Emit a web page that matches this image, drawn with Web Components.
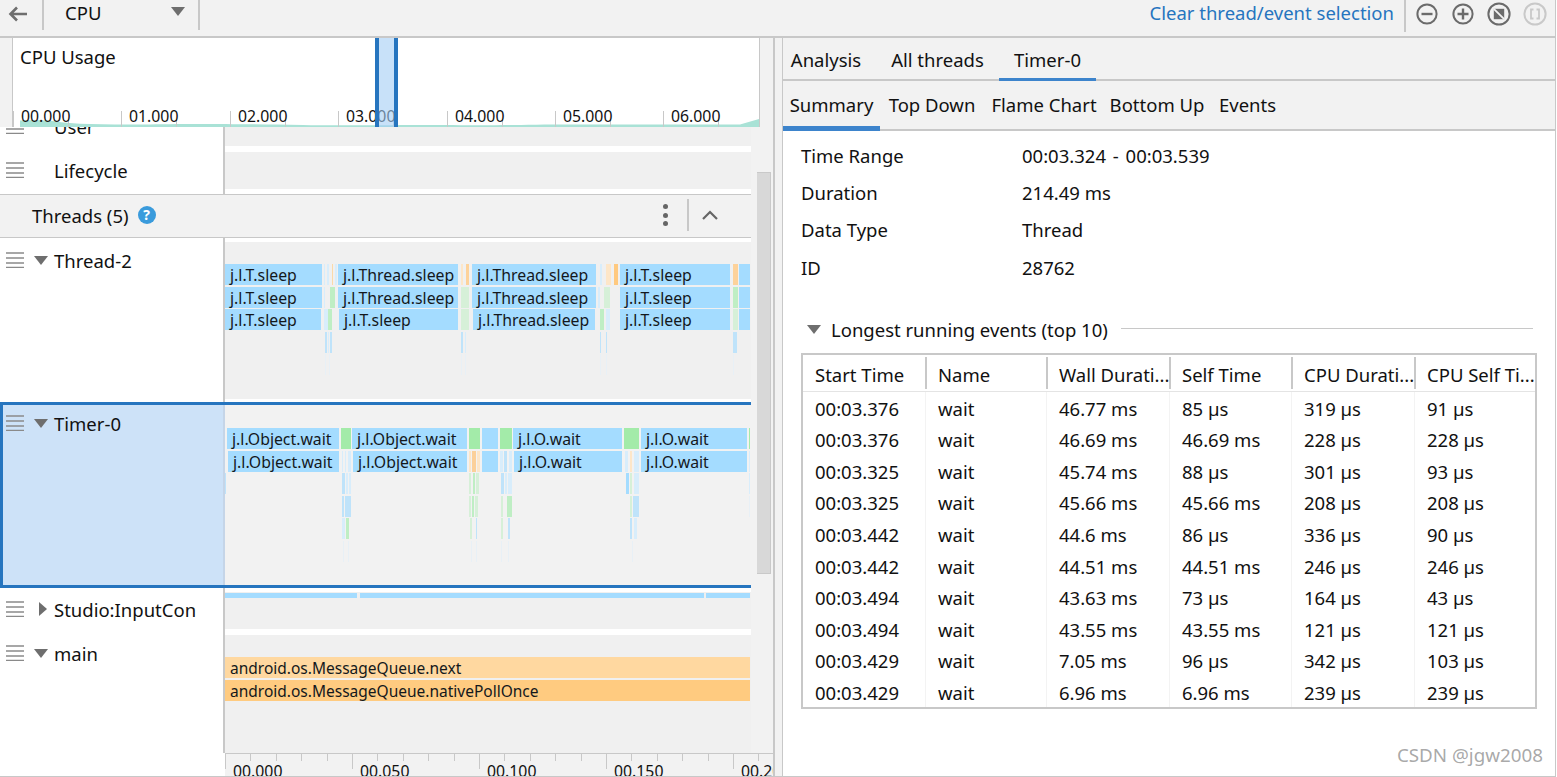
<!DOCTYPE html>
<html lang="en"><head><meta charset="utf-8"><title>CPU profiler</title>
<style>
html,body{margin:0;padding:0;background:#fff}
body{font-family:"Noto Sans","Open Sans",sans-serif;font-size:18.5px;color:#111;width:1557px;height:777px;overflow:hidden}
</style></head><body>
<profiler-app></profiler-app>
<script>
const LINE='#c8c8c8', PANEL='#f2f2f2', TRACK='#f0f0f0', BLUE='#2675bf';
function def(name, css, html, init){
  customElements.define(name, class extends HTMLElement{
    constructor(){super();const r=this.attachShadow({mode:'open'});
      r.innerHTML='<style>'+css+'</style>'+(typeof html==='function'?html(this):html);}
    connectedCallback(){if(init&&!this._i){this._i=1;init.call(this,this.shadowRoot);}}
  });
}
const tri='<svg width="14" height="9" viewBox="0 0 14 9" style="flex:none"><path d="M0 0H14L7 9Z" fill="#6e6e6e"/></svg>';
const triR='<svg width="8" height="14" viewBox="0 0 8 14" style="flex:none"><path d="M0 0V14L8 7Z" fill="#6e6e6e"/></svg>';

/* ---------- top bar ---------- */
def('zoom-icon',':host{display:block;width:24px;height:24px}svg{display:block}','<svg width="24" height="24" viewBox="0 0 24 24"></svg>',function(r){
  const k=this.getAttribute('kind'),s=r.querySelector('svg');
  const c=k==='fit-off'?'#c9c9c9':'#6b6b6b';
  let h='<circle cx="12" cy="12" r="'+(k==='minus'||k==='plus'?9.6:10.6)+'" fill="none" stroke="'+c+'" stroke-width="2"/>';
  if(k==='minus')h+='<path d="M6.5 12h11" stroke="'+c+'" stroke-width="2.4"/>';
  if(k==='plus')h+='<path d="M6.5 12h11M12 6.5v11" stroke="'+c+'" stroke-width="2.4"/>';
  if(k==='fit')h+='<path d="M6.8 6.8h10.4v10.4H6.8z" fill="#6b6b6b"/><path d="M6.8 6.8 17.2 17.2" stroke="#f2f2f2" stroke-width="1.8"/>';
  if(k==='fit-off')h+='<path d="M10.5 7.5H8v9h2.5M13.5 7.5H16v9h-2.5" fill="none" stroke="'+c+'" stroke-width="1.8"/>';
  s.innerHTML=h;
});
def('top-bar',`
:host{display:flex;align-items:flex-start;height:36px;background:${PANEL};border-bottom:2px solid ${LINE};box-sizing:content-box}
.sep{width:2px;height:30px;background:${LINE};flex:none}
.back{width:42px;height:28px;display:flex;align-items:center;justify-content:flex-start;padding-left:8px;box-sizing:border-box;flex:none}
.sel{width:154px;height:25px;display:flex;align-items:center;padding-left:21px;box-sizing:border-box;flex:none;justify-content:space-between;padding-right:13px}
.sp{flex:1}
a{color:${BLUE};height:25px;line-height:25px;margin-right:10px;text-decoration:none}
.icons{display:flex;gap:12px;padding:2px 8px 0 9px}
.sel svg{margin-bottom:2px}
`,`<div class="back"><svg width="19" height="16" viewBox="0 0 19 16"><path d="M19 8H3M9 1.5 2.500 8 9 14.500" fill="none" stroke="#6e6e6e" stroke-width="2.600"/></svg></div>
<div class="sep"></div><div class="sel"><span>CPU</span>${tri}</div><div class="sep"></div><div class="sp"></div>
<a>Clear thread/event selection</a><div class="sep" style="height:32px"></div>
<div class="icons"><zoom-icon kind="minus"></zoom-icon><zoom-icon kind="plus"></zoom-icon><zoom-icon kind="fit"></zoom-icon><zoom-icon kind="fit-off"></zoom-icon></div>`);

/* ---------- overview ---------- */
def('cpu-overview',`
:host{display:block;height:89px;background:${PANEL};padding-left:12px;flex:none}
.box{position:relative;width:748px;height:89px;background:#fff;border-left:1px solid ${LINE};border-right:1px solid ${LINE};box-sizing:border-box;overflow:hidden}
.title{padding:7px 0 0 7px;line-height:24px}
.tick{position:absolute;bottom:0;width:1px;background:${LINE}}
.lbl{position:absolute;top:66px;font-size:15.8px;line-height:24px}
svg{position:absolute;left:0;bottom:0}
.selbox{position:absolute;left:362px;top:0;width:23px;height:89px;box-sizing:border-box;border-left:4px solid ${BLUE};border-right:4px solid ${BLUE};background:rgba(164,205,245,.6)}
`,`<div class="box"><div class="title">CPU Usage</div>
<svg width="746" height="12" viewBox="0 0 746 12"><path d="M7 12V5.500C20 5 30 5 40 6 60 9.500 90 9.500 130 9.500 170 8.800 200 8.500 290 10 330 11 380 9.500 440 10 480 11 500 9.500 560 9.500H727L746 4V12Z" fill="#a9e2d6"/></svg>
<span id="t"></span><div class="selbox"></div></div>`,function(r){
  const t=r.getElementById('t');let h='';
  [0,1,2,3,4,5,6].forEach((n,i)=>{const x=[0,108,217,325,434,542,650][i];
    h+=`<i class="tick" style="left:${x}px;height:16px"></i><i class="tick" style="left:${x+55}px;height:8px"></i><span class="lbl" style="left:${x+8}px">0${n}.000</span>`;});
  t.innerHTML=h;
});

/* ---------- flame chart: bars on a free canvas ---------- */
const B='#a4dcff',G='#a3eba9',O='#ffc97f',LB='#d8edfb',LG='#d6f0d8',LO='#fde6c8',FB='#e8f0f6',TB='#bfe3fa',MG='#bfeec4';
const DATA={
 t2:{top:22,rows:[
  [[0,97,B,'j.l.T.sleep'],[99,100,LB],[102,104,LB],[107,108,'#fbd9a8'],[110,112,LB],[113,233,B,'j.l.Thread.sleep'],[236,238,LO],[241,244,'#fdd29a'],[247,371,B,'j.l.Thread.sleep'],[375,377,LB],[381,386,LO],[389,393,O],[395,505,B,'j.l.T.sleep'],[508,513,'#fdd29a'],[514,525,B]],
  [[0,97,B,'j.l.T.sleep'],[99,100,LB],[105,110,MG],[113,233,B,'j.l.Thread.sleep'],[236,244,LG],[247,371,B,'j.l.Thread.sleep'],[373,375,LB],[379,385,LG],[395,505,B,'j.l.T.sleep'],[508,513,MG],[514,525,B]],
  [[0,96,B,'j.l.T.sleep'],[99,103,LB],[103,107,MG],[114,233,B,'j.l.T.sleep'],[236,244,LG],[248,370,B,'j.l.Thread.sleep'],[375,379,MG],[381,385,LB],[395,505,B,'j.l.T.sleep'],[508,513,LG],[514,525,B]],
  [[100,102,TB],[103,104,LB],[105,107,TB],[236,238,TB],[240,241,LB],[375,376,TB],[381,382,TB],[508,512,TB]],
  [[100,101,FB],[104,105,FB],[236,237,FB],[240,241,FB],[375,376,FB],[381,382,FB],[508,509,FB]]
 ]},
 t0:{top:23,rows:[
  [[2,114,B,'j.l.Object.wait'],[116,126,G],[127,242,B,'j.l.Object.wait'],[244,255,G],[257,273,B],[275,287,G],[288,397,B,'j.l.O.wait'],[399,414,G],[416,522,B,'j.l.O.wait'],[524,525,G]],
  [[3,114,B,'j.l.Object.wait'],[117,118,LB],[120,121,LB],[123,126,LB],[128,242,B,'j.l.Object.wait'],[244,246,LO],[247,251,'#fbd09a'],[252,255,LO],[257,273,B],[275,278,LB],[279,282,TB],[284,287,LB],[289,397,B,'j.l.O.wait'],[400,403,LB],[405,407,LO],[409,414,LB],[416,522,B,'j.l.O.wait'],[524,525,LB]],
  [[0,1,TB],[117,120,TB],[121,123,LB],[124,126,LB],[244,246,LG],[248,250,MG],[251,254,LG],[276,279,TB],[280,282,LB],[283,287,LB],[401,404,B],[405,407,LG],[409,414,LB],[524,525,LB]],
  [[117,119,TB],[120,126,TB],[244,246,LG],[247,249,MG],[250,253,LG],[276,278,LG],[282,287,MG],[405,407,LG],[408,414,TB],[524,525,FB]],
  [[117,120,LB],[121,124,MG],[245,247,LG],[251,252,TB],[276,278,LG],[283,285,TB],[405,407,TB],[409,412,LB]],
  [[118,119,FB],[123,124,FB],[246,247,FB],[251,252,FB],[276,277,FB],[283,284,FB],[407,408,FB]]
 ]},
 studio:{top:1,h:5,rows:[[[0,132,B],[135,479,B],[481,525,B]]]},
 main:{top:22,fs:15.5,rows:[[[0,525,'#ffd8a0','android.os.MessageQueue.next']],[[0,525,'#ffcb80','android.os.MessageQueue.nativePollOnce']]]}
};
def('flame-chart',`
:host{display:block;position:relative;height:100%;overflow:hidden}
b{position:absolute;font-weight:400;font-size:15.8px;white-space:nowrap;overflow:hidden;line-height:23px;box-sizing:border-box;color:#14181c}
b.x{padding-left:5px}
`,'<div id="c"></div>',function(r){
  const d=DATA[this.getAttribute('data')],H=d.h||21;let h='';
  d.rows.forEach((row,i)=>row.forEach(([a,z,c,t])=>{
    h+=`<b${t?' class="x"':''} style="left:${a}px;width:${z-a}px;top:${d.top+i*22.6}px;height:${H}px;background:${c}${d.fs?';font-size:'+d.fs+'px':''}">${t||''}</b>`;}));
  r.getElementById('c').innerHTML=h;
});

/* ---------- track rows ---------- */
def('drag-handle',`:host{display:block;width:18px;height:16px;flex:none}svg{display:block}`,
 '<svg width="18" height="16" viewBox="0 0 18 16"><path d="M0 1h18M0 6h18M0 11h18M0 15.500h18" stroke="#8a8a8a" stroke-width="1.500"/></svg>');
def('track-row',`
:host{display:grid;grid-template-columns:223px 2px 526px;height:var(--h);flex:none;box-sizing:border-box;background:#fff}
.lab{padding:var(--lt,8px) 0 0 6px;box-sizing:border-box;display:flex;align-items:flex-start}
.in{display:flex;align-items:center;height:28px;width:100%}
.tw{width:30px;display:flex;justify-content:center;flex:none}
.tw .d{margin-left:4px;display:flex}.tw .r{margin-left:8px;display:flex}
.t{white-space:nowrap}
.v{background:${LINE}}
.c{padding:var(--pt,0) 0 var(--pb,0);box-sizing:border-box;height:100%}
.cv{background:${TRACK};height:100%}
:host([selected]){border-top:3px solid ${BLUE};border-bottom:3px solid ${BLUE};background:${PANEL}}
:host([selected]) .lab{background:#cde2f8;border-left:3px solid ${BLUE};padding-left:3px;padding-top:4px}
:host([selected]) .v{background:#c5d5e8}
:host([selected]) .cv{background:${PANEL}}
`,h=>{const a=h.getAttribute('arrow');return `<div class="lab"><div class="in"><drag-handle></drag-handle><span class="tw">${a==='down'?'<span class="d">'+tri+'</span>':a==='right'?'<span class="r">'+triR+'</span>':''}</span><span class="t"><slot name="label"></slot></span></div></div><div class="v"></div><div class="c"><div class="cv"><slot></slot></div></div>`});
def('threads-header',`
:host{display:flex;align-items:center;background:${PANEL};border-top:1px solid ${LINE};border-bottom:1px solid ${LINE};padding:0 0 2px 32px;box-sizing:border-box;flex:none;height:44px}
.q{width:18px;height:18px;border-radius:50%;background:#3a9bdc;color:#fff;font-size:14px;font-weight:700;line-height:18px;text-align:center;margin-left:9px}
.sp{flex:1}
.k{display:flex;flex-direction:column;gap:3.500px;margin-right:19px}
.k i{width:5px;height:5px;border-radius:50%;background:#666}
.s{width:2px;height:32px;background:${LINE}}
svg{margin:0 33px 0 13px}
`,`<span>Threads (5)</span><span class="q">?</span><span class="sp"></span><span class="k"><i></i><i></i><i></i></span><span class="s"></span><svg width="16" height="10" viewBox="0 0 16 10"><path d="M1 9 8 2l7 7" fill="none" stroke="#666" stroke-width="2.200"/></svg>`);

def('time-axis',`
:host{display:block;position:relative;height:23px;background:${PANEL};border-top:1px solid ${LINE};width:548px;overflow:hidden;box-sizing:border-box;flex:none}
i{position:absolute;top:0;width:1px;background:${LINE}}
span{position:absolute;top:5px;font-size:15.8px;line-height:24px}
`,'<div id="a"></div>',function(r){
  let h='';for(let n=0;n<22;n++){const x=Math.round(n*25.4);if(x>546)break;h+=`<i style="left:${x}px;height:${n%5?7:15}px"></i>`;
    if(n%5===0){const v=(n/5*50);h+=`<span style="left:${x+8}px">00.${String(v).padStart(3,'0')}</span>`;}}
  r.getElementById('a').innerHTML=h;
});

def('left-pane',`
:host{display:flex;flex-direction:column;width:773px;height:739px;background:${PANEL};flex:none;overflow:hidden}
.mid{display:flex;height:626px;flex:none;overflow:hidden}
.list{width:751px;display:flex;flex-direction:column;overflow:hidden;background:#fff}
.gut{width:22px;padding:45px 2px 0 6px;box-sizing:border-box;flex:none}
.th{height:402px;background:#d8d8d8;border-top:1px solid #c9c9c9;border-right:1px solid #c9c9c9;border-bottom:1px solid #c9c9c9;box-sizing:border-box}
.ax{background:#fff;padding-left:225px;height:23px;flex:none}
`,`<cpu-overview></cpu-overview>
<div class="mid"><div class="list">
 <track-row style="--h:40px;--pb:6px;--lt:0px;margin-top:-15px"><span slot="label">User</span></track-row>
 <track-row style="--h:42px;--pb:5px;--lt:4px"><span slot="label">Lifecycle</span></track-row>
 <threads-header></threads-header>
 <track-row arrow="down" style="--h:164px;--pt:4px;--pb:3px"><span slot="label">Thread-2</span><flame-chart data="t2"></flame-chart></track-row>
 <track-row arrow="down" selected style="--h:186px"><span slot="label">Timer-0</span><flame-chart data="t0"></flame-chart></track-row>
 <track-row arrow="right" style="--h:47px;--pt:4px;--pb:6px;--lt:7px"><span slot="label">Studio:InputCon</span><flame-chart data="studio"></flame-chart></track-row>
 <track-row arrow="down" style="--h:118px;--lt:4px"><span slot="label">main</span><flame-chart data="main"></flame-chart></track-row>
</div><div class="gut"><div class="th"></div></div></div>
<div class="ax"><time-axis></time-axis></div>`);

/* ---------- right side ---------- */
def('tab-strip',`
:host{display:flex;height:var(--h);border-bottom:2px solid ${LINE};background:${PANEL};flex:none;box-sizing:content-box}
::slotted(tab-item){flex:none}
`,'<slot></slot>');
def('tab-item',`
:host{display:flex;align-items:center;justify-content:center;width:var(--w);height:100%;box-sizing:border-box;white-space:nowrap;position:relative;padding-top:var(--tp,0);padding-bottom:var(--bp,0)}
:host([active])::after{content:"";position:absolute;left:0;right:0;bottom:-2px;height:var(--bar,3px);background:#3d84cc}
`,'<slot></slot>');
def('info-row',`:host{display:grid;grid-template-columns:221px 1fr;height:37.400px;align-items:center}`,h=>{const v=h.getAttribute('v');return `<span>${h.getAttribute('k')}</span><span${v.includes(' - ')?' style="word-spacing:2px"':''}>${v}</span>`});
def('section-head',`:host{display:flex;align-items:center;height:24px}
svg{margin:0 10px 0 6px}.l{flex:1;height:1px;background:${LINE};margin-left:13px;margin-top:-2px}`,`${tri}<span><slot></slot></span><i class="l"></i>`);
const COLS=['Start Time','Name','Wall Durati...','Self Time','CPU Durati...','CPU Self Ti...'];
const ROWS=[['00:03.376','46.77 ms','85 µs','319 µs','91 µs'],['00:03.376','46.69 ms','46.69 ms','228 µs','228 µs'],['00:03.325','45.74 ms','88 µs','301 µs','93 µs'],['00:03.325','45.66 ms','45.66 ms','208 µs','208 µs'],['00:03.442','44.6 ms','86 µs','336 µs','90 µs'],['00:03.442','44.51 ms','44.51 ms','246 µs','246 µs'],['00:03.494','43.63 ms','73 µs','164 µs','43 µs'],['00:03.494','43.55 ms','43.55 ms','121 µs','121 µs'],['00:03.429','7.05 ms','96 µs','342 µs','103 µs'],['00:03.429','6.96 ms','6.96 ms','239 µs','239 µs']];
def('events-table',`
:host{display:block;width:736px;height:356px;border:2px solid ${LINE};box-sizing:border-box;background:#fff;overflow:hidden}
.g{display:grid;grid-template-columns:122px 121px 123px 122px 123px 121px;grid-template-rows:37px repeat(10,31.550px)}
.h{display:flex;align-items:center;padding:4px 0 0 12px;border-bottom:1px solid #e4e4e4;white-space:nowrap;overflow:hidden;box-sizing:border-box;height:37px;position:relative;z-index:1}
.h+.h{padding-left:13px}
.h+.h::before{content:"";position:absolute;left:0;top:2px;bottom:2px;width:2px;background:${LINE}}
.c{display:flex;align-items:center;padding:2px 0 0 12px;white-space:nowrap;box-sizing:border-box}
.c.n{padding-left:12px;border-left:1px solid #f3f3f3}
`,'<div class="g" id="g"></div>',function(r){
  let h=COLS.map(c=>`<div class="h">${c}</div>`).join('');
  ROWS.forEach(x=>{const row=[x[0],'wait',x[1],x[2],x[3],x[4]];
    h+=row.map((v,i)=>`<div class="c${i?' n':''}">${v}</div>`).join('');});
  r.getElementById('g').innerHTML=h;
});
def('right-pane',`
:host{display:flex;flex-direction:column;flex:1;height:739px;overflow:hidden;position:relative;background:#fff}
.body{padding:5.500px 18px 0 18px;flex:1}
.info{margin-bottom:31.500px}
section-head{margin-bottom:11px;padding-right:4px}
.wm{position:absolute;right:12px;bottom:10px;color:rgba(120,120,120,.65);font-size:18.8px;line-height:24px}
`,`<tab-strip style="--h:41px;--tp:2px">
 <tab-item style="--w:86px">Analysis</tab-item><tab-item style="--w:130px;padding-left:7px">All threads</tab-item>
 <tab-item active style="--w:97px">Timer-0</tab-item></tab-strip>
<tab-strip style="--h:48px;--bp:2px">
 <tab-item active style="--w:97px;--bar:5px">Summary</tab-item><tab-item style="--w:104px">Top Down</tab-item>
 <tab-item style="--w:112px;margin-left:4px">Flame Chart</tab-item><tab-item style="--w:114px">Bottom Up</tab-item><tab-item style="--w:67px">Events</tab-item></tab-strip>
<div class="body"><div class="info">
 <info-row k="Time Range" v="00:03.324 - 00:03.539"></info-row><info-row k="Duration" v="214.49 ms"></info-row>
 <info-row k="Data Type" v="Thread"></info-row><info-row k="ID" v="28762"></info-row></div>
 <section-head>Longest running events (top 10)</section-head>
 <events-table></events-table></div>
<div class="wm">CSDN @jgw2008</div>`);

def('profiler-app',`
:host{display:block;width:1556px;height:777px;border-right:1px solid ${LINE};border-bottom:1px solid ${LINE};box-sizing:border-box;overflow:hidden}
.m{display:flex}
.d{width:10px;flex:none;background:${PANEL};border-left:2px solid ${LINE};border-right:1px solid ${LINE};box-sizing:border-box;height:739px}
`,`<top-bar></top-bar><div class="m"><left-pane></left-pane><div class="d"></div><right-pane></right-pane></div>`);
</script>
</body></html>
